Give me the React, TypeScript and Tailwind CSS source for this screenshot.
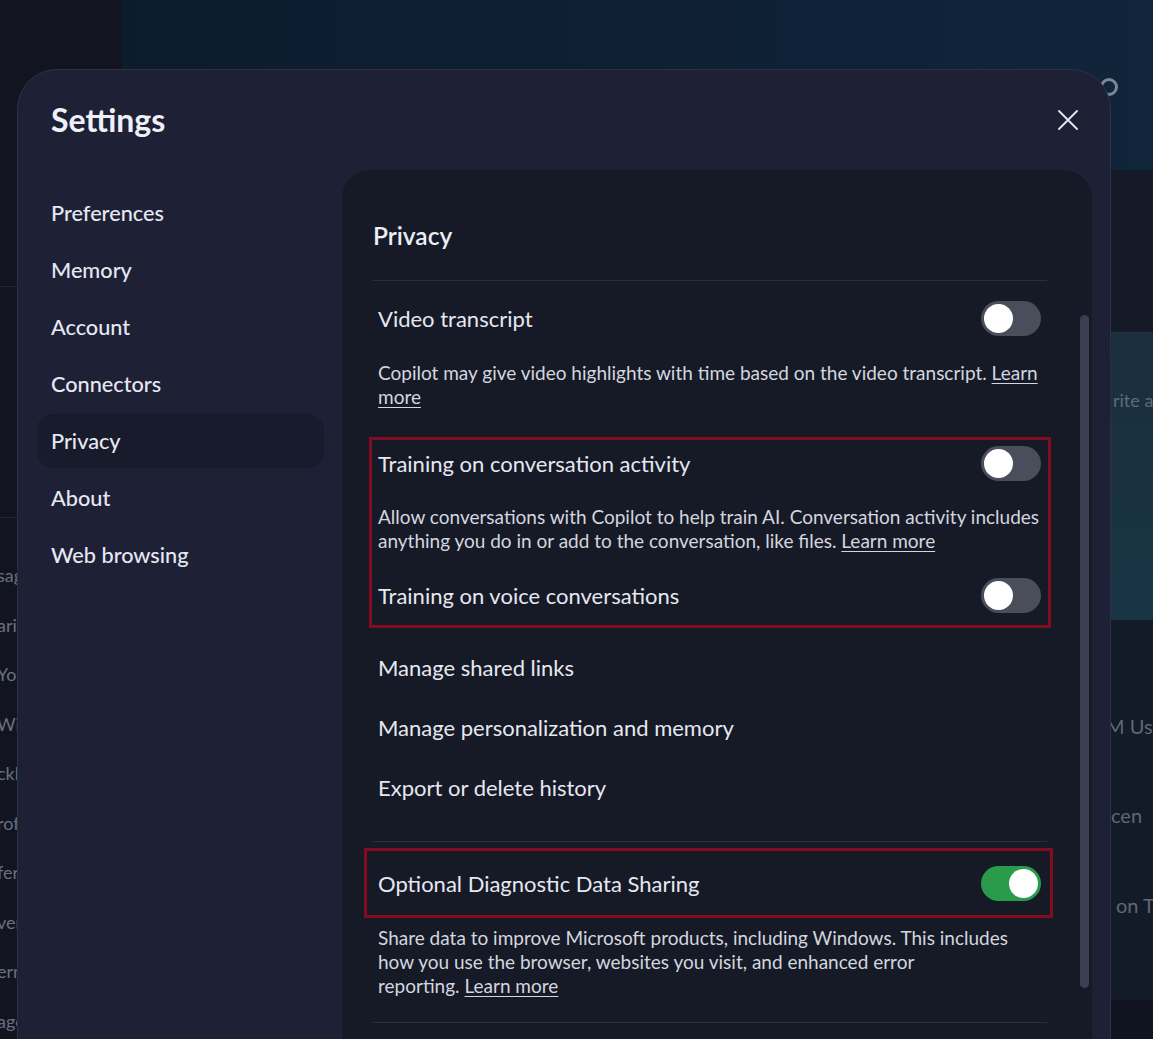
import React from "react";

function Toggle({ on }: { on?: boolean }) {
  return (
    <div
      className={
        on
          ? "flex h-[35px] w-[60px] shrink-0 items-center justify-end rounded-full bg-[#2a9b4b] px-[3px]"
          : "flex h-[35px] w-[60px] shrink-0 items-center rounded-full bg-[#4a4d5a] px-[3px]"
      }
    >
      <div className="h-[29px] w-[29px] rounded-full bg-white" />
    </div>
  );
}

function Learn({ children }: { children: React.ReactNode }) {
  return <span className="underline underline-offset-[3px]">{children}</span>;
}

const navItems = ["Preferences", "Memory", "Account", "Connectors", "Privacy", "About", "Web browsing"];
const leftBits = ["sage", "aria", "You", "Win", "ckl", "rof", "fer", "ver", "ern", "age"];

export default function App() {
  return (
    <div className="relative h-[1039px] w-full overflow-hidden bg-[#11141d] font-['Lato',sans-serif] text-[#e6e8f0]">
      {/* app behind the dialog */}
      <div className="flex h-full">
        <div className="flex w-[122px] shrink-0 flex-col bg-[#12151f]">
          <div className="h-[287px] shrink-0 border-b border-[#222636]" />
          <div className="h-[231px] shrink-0 border-b border-[#222636]" />
          <div className="flex shrink-0 flex-col pt-[33px] text-[18px] leading-[49.5px] text-[#6a7081]">
            {leftBits.map((b) => (
              <span key={b} className="-ml-[3px] whitespace-nowrap">{b}</span>
            ))}
          </div>
        </div>
        <div className="flex flex-1 flex-col">
          <div className="relative h-[170px] shrink-0 bg-gradient-to-r from-[#0d1b2e] to-[#10243a]">
            <div className="absolute left-[978px] top-[78px] h-[18px] w-[18px] rounded-full border-[3px] border-[#7d8696]" />
          </div>
          <div className="h-[163px] shrink-0 border-b border-[#263146] bg-[#141a28]" />
          <div className="h-[287px] shrink-0 bg-gradient-to-b from-[#1a2e3e] to-[#193545] pl-[991px] pt-[54px] text-[18px] text-[#5d6b78]">
            <span className="whitespace-nowrap">rite a</span>
          </div>
          <div className="flex h-[380px] shrink-0 flex-col bg-[#131a28] pt-[92px] text-[20px] leading-[28px] text-[#5f6877]">
            <span className="ml-[984px] whitespace-nowrap">M Us</span>
            <span className="ml-[989px] mt-[61px] whitespace-nowrap">cen</span>
            <span className="ml-[994px] mt-[62px] whitespace-nowrap">on T</span>
          </div>
          <div className="flex-1 bg-[#0f1420]" />
        </div>
      </div>

      {/* settings dialog */}
      <div className="absolute left-[17px] top-[69px] flex h-[1010px] w-[1094px] flex-col rounded-t-[40px] border border-[#2c3148] bg-[#1e2136]">
        <div className="flex items-center justify-between pl-[33px] pr-[32px] pt-[32px]">
          <h1 className="text-[32px] font-bold leading-[36px] text-[#eef0f8]">Settings</h1>
          <svg width="20" height="20" viewBox="0 0 20 20" className="text-[#e6e8f0]">
            <path d="M1 1 19 19M19 1 1 19" stroke="currentColor" strokeWidth="1.8" strokeLinecap="round" />
          </svg>
        </div>

        <div className="mt-[32px] flex flex-1">
          <nav className="ml-[19px] flex w-[287px] shrink-0 flex-col gap-[3px] pt-[16px]">
            {navItems.map((n) => (
              <div
                key={n}
                className={
                  n === "Privacy"
                    ? "flex h-[54px] items-center rounded-[16px] bg-[#181b2b] pl-[14px] text-[21.7px] font-medium text-[#e6e8f2]"
                    : "flex h-[54px] items-center rounded-[16px] pl-[14px] text-[21.7px] font-medium text-[#e6e8f2]"
                }
              >
                {n}
              </div>
            ))}
          </nav>

          <section className="relative ml-[18px] w-[750px] rounded-t-[28px] bg-[#161a27] pl-[31px] pr-[45px] pt-[50px]">
            <h2 className="text-[24.5px] font-semibold leading-[32px] text-[#eceef6]">Privacy</h2>
            <div className="mt-[28px] h-px bg-[#2a2f3f]" />

            <div className="mt-[20px] flex items-center justify-between pl-[5px] pr-[6px]">
              <span className="text-[22px]">Video transcript</span>
              <Toggle />
            </div>
            <p className="mt-[25px] whitespace-nowrap pl-[5px] text-[19px] leading-[24px] text-[#d3d6df]">
              Copilot may give video highlights with time based on the video transcript. <Learn>Learn</Learn>
              <br />
              <Learn>more</Learn>
            </p>

            <div className="-mx-[4px] mt-[28px] border-[3px] border-[#840c22] pb-[12px] pl-[6px] pr-[7px] pt-[6px]">
              <div className="flex items-center justify-between">
                <span className="text-[22px]">Training on conversation activity</span>
                <Toggle />
              </div>
              <p className="mt-[24px] whitespace-nowrap text-[19px] leading-[24px] text-[#d3d6df]">
                Allow conversations with Copilot to help train AI. Conversation activity includes
                <br />
                anything you do in or add to the conversation, like files. <Learn>Learn more</Learn>
              </p>
              <div className="mt-[25px] flex items-center justify-between">
                <span className="text-[22px]">Training on voice conversations</span>
                <Toggle />
              </div>
            </div>

            <div className="mt-[9px] flex flex-col pl-[5px] text-[22px]">
              <div className="flex h-[60px] items-center">Manage shared links</div>
              <div className="flex h-[60px] items-center">Manage personalization and memory</div>
              <div className="flex h-[60px] items-center">Export or delete history</div>
            </div>

            <div className="mt-[24px] h-px bg-[#2a2f3f]" />

            <div className="-ml-[9px] -mr-[6px] mt-[6px] flex items-center justify-between border-[3px] border-[#840c22] pb-[14px] pl-[11px] pr-[9px] pt-[15px]">
              <span className="text-[22px]">Optional Diagnostic Data Sharing</span>
              <Toggle on />
            </div>
            <p className="mt-[8px] whitespace-nowrap pl-[5px] text-[19px] leading-[24px] text-[#d3d6df]">
              Share data to improve Microsoft products, including Windows. This includes
              <br />
              how you use the browser, websites you visit, and enhanced error
              <br />
              reporting. <Learn>Learn more</Learn>
            </p>
            <div className="mt-[24px] h-px bg-[#2a2f3f]" />

            <div className="absolute right-[3px] top-[145px] h-[673px] w-[9px] rounded-full bg-[#3a3f52]" />
          </section>
        </div>
      </div>
    </div>
  );
}
